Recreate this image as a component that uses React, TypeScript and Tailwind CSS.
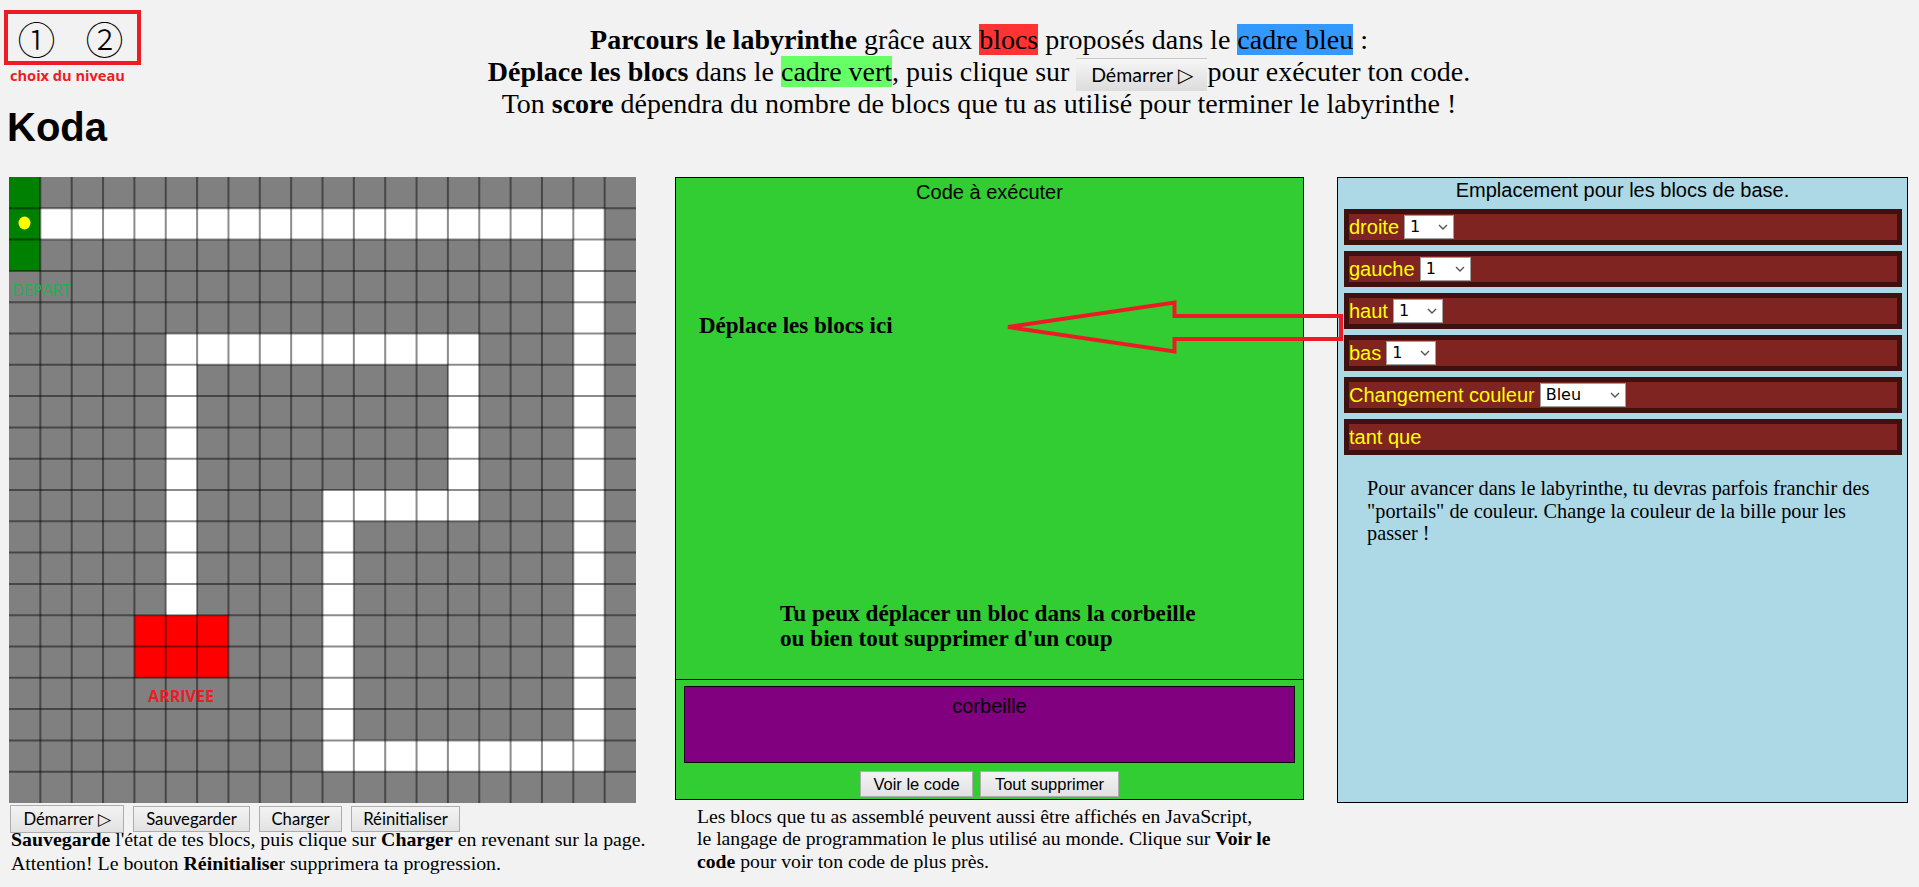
import React from "react";

const MAZE = [
  "SGGGGGGGGGGGGGGGGGGG",
  "SWWWWWWWWWWWWWWWWWWG",
  "SGGGGGGGGGGGGGGGGGWG",
  "GGGGGGGGGGGGGGGGGGWG",
  "GGGGGGGGGGGGGGGGGGWG",
  "GGGGGWWWWWWWWWWGGGWG",
  "GGGGGWGGGGGGGGWGGGWG",
  "GGGGGWGGGGGGGGWGGGWG",
  "GGGGGWGGGGGGGGWGGGWG",
  "GGGGGWGGGGGGGGWGGGWG",
  "GGGGGWGGGGWWWWWGGGWG",
  "GGGGGWGGGGWGGGGGGGWG",
  "GGGGGWGGGGWGGGGGGGWG",
  "GGGGGWGGGGWGGGGGGGWG",
  "GGGGRRRGGGWGGGGGGGWG",
  "GGGGRRRGGGWGGGGGGGWG",
  "GGGGGGGGGGWGGGGGGGWG",
  "GGGGGGGGGGWGGGGGGGWG",
  "GGGGGGGGGGWWWWWWWWWG",
  "GGGGGGGGGGGGGGGGGGGG",
];

const COLORS: Record<string, string> = {
  G: "#808080",
  W: "#ffffff",
  S: "#008000",
  R: "#ff0000",
};

function Maze() {
  const W = 627;
  const H = 626;
  const cw = W / 20;
  const ch = H / 20;
  const rects: React.ReactNode[] = [];
  MAZE.forEach((row, r) => {
    row.split("").forEach((c, k) => {
      rects.push(
        <rect
          key={`${r}-${k}`}
          x={k * cw}
          y={r * ch}
          width={cw + 0.5}
          height={ch + 0.5}
          fill={COLORS[c]}
        />
      );
    });
  });
  const lines: React.ReactNode[] = [];
  for (let i = 1; i < 20; i++) {
    lines.push(
      <line key={`v${i}`} x1={i * cw} y1={0} x2={i * cw} y2={H} stroke="rgba(0,0,0,0.45)" strokeWidth={2} />
    );
    lines.push(
      <line key={`h${i}`} x1={0} y1={i * ch} x2={W} y2={i * ch} stroke="rgba(0,0,0,0.45)" strokeWidth={2} />
    );
  }
  return (
    <svg width={W} height={H} viewBox={`0 0 ${W} ${H}`} className="block">
      {rects}
      {lines}
      <ellipse cx={15.5} cy={46} rx={6} ry={6.5} fill="#ffff00" />
      <text x={3} y={119} fill="#22b14c" fontSize={16} fontFamily="'Open Sans', sans-serif">
        DEPART
      </text>
      <text
        x={172}
        y={525}
        fill="#ed1c24"
        fontSize={16}
        fontWeight={700}
        textAnchor="middle"
        fontFamily="'Open Sans', sans-serif"
      >
        ARRIVEE
      </text>
    </svg>
  );
}

function Chevron() {
  return (
    <svg width="10" height="6" viewBox="0 0 10 6" className="block">
      <path d="M1 1 L5 5 L9 1" fill="none" stroke="#555" strokeWidth="1.4" />
    </svg>
  );
}

function FakeSelect({ value, width }: { value: string; width: string }) {
  return (
    <div
      className={`${width} h-[24px] bg-white border border-[#a0a0a0] flex items-center justify-between pl-[5px] pr-[5px] font-['DejaVu_Sans',sans-serif] text-[16px] text-black`}
    >
      <span>{value}</span>
      <Chevron />
    </div>
  );
}

function Block({ label, select }: { label: string; select?: React.ReactNode }) {
  return (
    <div className="h-[36px] border-[5px] border-[#3f1010] bg-[#802421] flex items-center gap-[5px] font-['Liberation_Sans',sans-serif] text-[20px] text-[#ffff00] leading-none">
      <span>{label}</span>
      {select}
    </div>
  );
}

const btnLeft =
  "h-[26px] border border-[#adadad] bg-gradient-to-b from-[#f3f3f3] to-[#e2e2e2] font-['Lato',sans-serif] text-[16.7px] text-black flex items-center justify-center leading-none";

const btnMid =
  "h-[26px] border border-[#adadad] bg-gradient-to-b from-[#f3f3f3] to-[#e2e2e2] font-['Liberation_Sans',sans-serif] text-[16.5px] text-black flex items-center justify-center leading-none";

export default function App() {
  return (
    <div className="relative w-[1919px] h-[887px] overflow-hidden bg-[#f2f2f2] text-black font-['Liberation_Serif',serif]">
      {/* Header */}
      <div className="flex h-[177px]">
        <div className="w-[150px] shrink-0 pl-[4px] pt-[10px]">
          <div className="w-[137px] h-[55px] border-4 border-[#ed1c24] flex items-center pl-[10px] gap-[31px] font-['Noto_Sans_CJK_JP',sans-serif] font-light text-[38px] leading-none">
            <span className="w-[37px] flex justify-center">①</span>
            <span className="w-[37px] flex justify-center">②</span>
          </div>
          <div className="mt-[1px] pl-[6px] h-[18px] leading-[18px] font-['Open_Sans',sans-serif] font-bold text-[14.6px] text-[#ed1c24]">
            choix du niveau
          </div>
          <h1 className="mt-[20px] ml-[3px] font-['Liberation_Sans',sans-serif] font-bold text-[40px] leading-[46px]">
            Koda
          </h1>
        </div>
        <div className="flex-1 pr-[111px] pt-[24px] text-center text-[28px] leading-[32px]">
          <div>
            <b>Parcours le labyrinthe</b> grâce aux <span className="bg-[#ff3333]">blocs</span> proposés dans le{" "}
            <span className="bg-[#3399ff]">cadre bleu</span> :
          </div>
          <div>
            <b>Déplace les blocs</b> dans le <span className="bg-[#66ff66]">cadre vert</span>, puis clique sur{" "}
            <span className="inline-flex align-middle -my-[6px] h-[33px] w-[131px] items-center justify-center border-t border-[#c8c8c8] bg-gradient-to-b from-[#f6f6f6] to-[#dcdcdc] font-['Lato',sans-serif] text-[19.5px] leading-none">
              Démarrer ▷
            </span>
            pour exécuter ton code.
          </div>
          <div>
            Ton <b>score</b> dépendra du nombre de blocs que tu as utilisé pour terminer le labyrinthe !
          </div>
        </div>
      </div>

      {/* Main */}
      <div className="flex items-start">
        {/* Left column */}
        <div className="ml-[9px] w-[627px] shrink-0">
          <Maze />
          <div className="mt-[2px] ml-[1px] h-[28px] flex items-center gap-[9px]">
            <button className={`${btnLeft} w-[114px] h-[28px]`}>Démarrer ▷</button>
            <button className={`${btnLeft} w-[117px]`}>Sauvegarder</button>
            <button className={`${btnLeft} w-[83px]`}>Charger</button>
            <button className={`${btnLeft} w-[109px]`}>Réinitialiser</button>
          </div>
          <div className="ml-[2px] -mt-[5px] w-[627px] text-[19.85px] leading-[23.5px] whitespace-nowrap">
            <b>Sauvegarde</b> l'état de tes blocs, puis clique sur <b>Charger</b> en revenant sur la page.
            <br />
            Attention! Le bouton <b>Réinitialise</b>r supprimera ta progression.
          </div>
        </div>

        {/* Middle column */}
        <div className="ml-[39px] w-[629px] shrink-0">
          <div className="h-[503px] border border-black bg-[#32cd32]">
            <div className="pt-[3px] h-[26px] leading-[23px] text-center font-['Liberation_Sans',sans-serif] text-[20px]">
              Code à exécuter
            </div>
            <div className="mt-[109px] pl-[23px] font-bold text-[23px] leading-[26px]">Déplace les blocs ici</div>
            <div className="mt-[262px] pl-[104px] font-bold text-[23.2px] leading-[25px]">
              Tu peux déplacer un bloc dans la corbeille
              <br />
              ou bien tout supprimer d'un coup
            </div>
          </div>
          <div className="h-[120px] border-x border-b border-black bg-[#32cd32] px-[8px] pt-[6px]">
            <div className="h-[77px] border border-black bg-[#800080] pt-[8px] text-center font-['Liberation_Sans',sans-serif] text-[20px] leading-[22px]">
              corbeille
            </div>
            <div className="mt-[8px] flex justify-center gap-[7px]">
              <button className={`${btnMid} w-[113px]`}>Voir le code</button>
              <button className={`${btnMid} w-[139px]`}>Tout supprimer</button>
            </div>
          </div>
          <div className="mt-[5px] ml-[22px] w-[600px] text-[19.7px] leading-[22.3px] whitespace-nowrap">
            Les blocs que tu as assemblé peuvent aussi être affichés en JavaScript,
            <br />
            le langage de programmation le plus utilisé au monde. Clique sur <b>Voir le</b>
            <br />
            <b>code</b> pour voir ton code de plus près.
          </div>
        </div>

        {/* Right column */}
        <div className="ml-[33px] w-[571px] h-[626px] shrink-0 border border-black bg-[#add8e6]">
          <div className="pt-[1px] h-[24px] leading-[23px] text-center font-['Liberation_Sans',sans-serif] text-[20px]">
            Emplacement pour les blocs de base.
          </div>
          <div className="mt-[7px] ml-[6px] mr-[5px] flex flex-col gap-[6px]">
            <Block label="droite" select={<FakeSelect value="1" width="w-[50px]" />} />
            <Block label="gauche" select={<FakeSelect value="1" width="w-[51px]" />} />
            <Block label="haut" select={<FakeSelect value="1" width="w-[50px]" />} />
            <Block label="bas" select={<FakeSelect value="1" width="w-[50px]" />} />
            <Block label="Changement couleur" select={<FakeSelect value="Bleu" width="w-[86px]" />} />
            <Block label="tant que" />
          </div>
          <p className="mt-[22px] ml-[29px] w-[511px] text-[20.3px] leading-[22.5px]">
            Pour avancer dans le labyrinthe, tu devras parfois franchir des "portails" de couleur. Change la couleur de
            la bille pour les passer !
          </p>
        </div>
      </div>

      {/* Red arrow overlay */}
      <svg className="absolute left-0 top-0 pointer-events-none" width="1919" height="887">
        <polygon
          points="1008,327 1174.5,302.5 1174.5,316 1341,316 1341,339 1174.5,339 1174.5,351.5"
          fill="none"
          stroke="#ed1c24"
          strokeWidth="4"
          strokeLinejoin="miter"
        />
      </svg>
    </div>
  );
}
